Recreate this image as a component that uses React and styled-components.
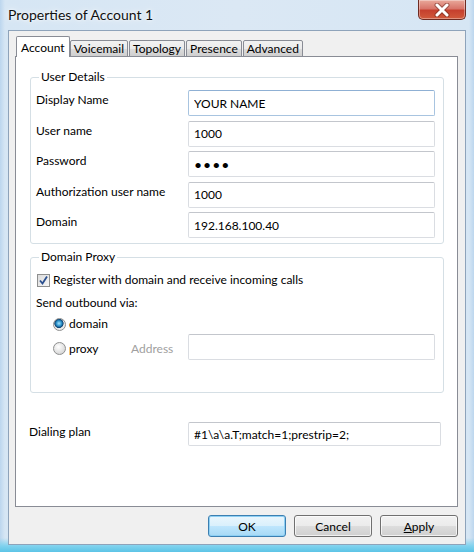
import styled, { createGlobalStyle } from "styled-components";

const GlobalStyle = createGlobalStyle`
  html, body {
    margin: 0;
    padding: 0;
  }
  body {
    width: 474px;
    height: 552px;
    overflow: hidden;
    font-family: Lato, "Noto Sans", sans-serif;
    font-size: 12px;
    color: #000;
  }
  * { box-sizing: border-box; }
`;

const tabs = ["Account", "Voicemail", "Topology", "Presence", "Advanced"];

const userFields = [
  { label: "Display Name", value: "YOUR NAME", focused: true },
  { label: "User name", value: "1000" },
  { label: "Password", value: "1234", type: "password" },
  { label: "Authorization user name", value: "1000" },
  { label: "Domain", value: "192.168.100.40" },
];

const App = () => {
  return (
    <Window>
      <GlobalStyle />
      <TitleBar>
        <Title>Properties of Account 1</Title>
        <CloseButton>
          <svg width="20" height="14" viewBox="0 0 20 14">
            <path d="M5 2 L15 12 M15 2 L5 12" stroke="#6b2a20" strokeWidth="5" strokeLinecap="round" opacity="0.55" />
            <path d="M5 2 L15 12 M15 2 L5 12" stroke="#fff" strokeWidth="3" strokeLinecap="round" />
          </svg>
        </CloseButton>
      </TitleBar>

      <Client>
        <TabStrip>
          {tabs.map((t, i) => (
            <Tab key={t} $active={i === 0}>{t}</Tab>
          ))}
        </TabStrip>

        <Panel>
          <Group>
            <Legend>User Details</Legend>
            <FieldGrid>
              {userFields.map((f) => (
                <Row key={f.label}>
                  <Label>{f.label}</Label>
                  <TextBox
                    readOnly
                    type={f.type || "text"}
                    value={f.value}
                    $focused={f.focused}
                    $secret={f.type === "password"}
                  />
                </Row>
              ))}
            </FieldGrid>
          </Group>

          <ProxyGroup>
            <Legend>Domain Proxy</Legend>
            <CheckRow>
              <CheckBox>
                <svg width="11" height="11" viewBox="0 0 11 11">
                  <path d="M2 5.5 L4.5 8.5 L9 1.5" stroke="#2a4f8f" strokeWidth="1.8" fill="none" />
                </svg>
              </CheckBox>
              Register with domain and receive incoming calls
            </CheckRow>
            <Caption>Send outbound via:</Caption>
            <RadioRow>
              <Radio $checked />
              domain
            </RadioRow>
            <ProxyRow>
              <RadioLabel>
                <Radio />
                proxy
              </RadioLabel>
              <Dimmed>Address</Dimmed>
              <TextBox readOnly value="" />
            </ProxyRow>
          </ProxyGroup>

          <DialRow>
            <Label>Dialing plan</Label>
            <DialBox readOnly value="#1\a\a.T;match=1;prestrip=2;" />
          </DialRow>
        </Panel>

        <ButtonBar>
          <Button $default>OK</Button>
          <Button>Cancel</Button>
          <Button>
            <u>A</u>pply
          </Button>
        </ButtonBar>
      </Client>
    </Window>
  );
};

const Window = styled.div`
  width: 474px;
  height: 552px;
  display: flex;
  flex-direction: column;
  background:
    linear-gradient(to bottom, rgba(255,255,255,0) 538px, #7fd2ee 546px, #5cc4e6 552px),
    linear-gradient(to right, #bcd6ee 0px, #d6e6f4 5px, #dbe8f4 50%, #d6e6f4 469px, #bcd6ee 474px),
    linear-gradient(to bottom, #eef4fa 0%, #d2e3f3 12%, #c7dcf0 100%);
`;

const TitleBar = styled.div`
  height: 30px;
  flex-shrink: 0;
  display: flex;
  justify-content: space-between;
  align-items: flex-start;
  padding: 0 8px 0 8px;
`;

const Title = styled.div`
  margin-top: 6px;
  font-size: 14px;
  color: #111;
  text-shadow: 0 0 8px rgba(255,255,255,0.95), 0 0 3px #fff;
`;

const CloseButton = styled.div`
  width: 48px;
  height: 20px;
  border: 1px solid #6e2b22;
  border-top: none;
  border-radius: 0 0 5px 5px;
  background: linear-gradient(to bottom, #e9a99b 0%, #d8756a 45%, #c6402e 55%, #d15a3c 100%);
  box-shadow: inset 0 0 0 1px rgba(255,255,255,0.35);
  display: flex;
  align-items: center;
  justify-content: center;
`;

const Client = styled.div`
  flex: 1;
  margin: 0 8px 7px 8px;
  border: 1px solid #8ea3ba;
  background: #f0f0f0;
  display: flex;
  flex-direction: column;
  padding: 6px 7px 7px 6px;
`;

const TabStrip = styled.div`
  display: flex;
  align-items: flex-end;
  height: 20px;
  padding-left: 1px;
  margin-bottom: -1px;
  position: relative;
  z-index: 1;
`;

const Tab = styled.div`
  height: ${(p) => (p.$active ? "21px" : "17px")};
  padding: ${(p) => (p.$active ? "1px 4px 0 4px" : "0 3px")};
  margin-right: ${(p) => (p.$active ? "0" : "1px")};
  border: 1px solid #898c95;
  border-bottom: ${(p) => (p.$active ? "none" : "1px solid #898c95")};
  border-radius: 2px 2px 0 0;
  background: ${(p) =>
    p.$active ? "#fff" : "linear-gradient(to bottom, #f2f2f2 0%, #ebebeb 50%, #dddddd 51%, #cfcfcf 100%)"};
  display: flex;
  align-items: center;
  font-size: 12px;
  line-height: 14px;
  white-space: nowrap;
`;

const Panel = styled.div`
  flex: 1;
  background: #fff;
  border: 1px solid #898c95;
  padding: 12px 13px 0 14px;
  display: flex;
  flex-direction: column;
`;

const Group = styled.fieldset`
  margin: 0;
  border: 1px solid #d5dfe5;
  border-radius: 3px;
  padding: 5px 8px 5px 5px;
  min-width: 0;
`;

const ProxyGroup = styled(Group)`
  margin-top: 5px;
  padding: 7px 8px 32px 5px;
  display: flex;
  flex-direction: column;
`;

const Legend = styled.legend`
  padding: 0 2px;
  margin-left: 3px;
  font-size: 12px;
  line-height: 16px;
`;

const FieldGrid = styled.div`
  display: flex;
  flex-direction: column;
  gap: 4.5px;
`;

const Row = styled.div`
  display: grid;
  grid-template-columns: 152px 1fr;
  align-items: start;
`;

const Label = styled.div`
  padding-top: 2px;
  line-height: 16px;
  white-space: nowrap;
`;

const TextBox = styled.input`
  height: 26px;
  width: 100%;
  margin: 0;
  padding: 0 5px;
  font-family: inherit;
  font-size: ${(p) => (p.$secret ? "14px" : "12px")};
  letter-spacing: ${(p) => (p.$secret ? "1px" : "normal")};
  color: #000;
  background: #fff;
  border: 1px solid ${(p) => (p.$focused ? "#a8c4e0" : "#dadde2")};
  border-top-color: ${(p) => (p.$focused ? "#8fb0d4" : "#c3c6cc")};
  border-radius: 2px;
  outline: none;
`;

const DialBox = styled(TextBox)`
  height: 24px;
`;

const CheckRow = styled.div`
  display: flex;
  align-items: center;
  gap: 3px;
  margin-left: 1px;
  line-height: 16px;
`;

const CheckBox = styled.span`
  width: 13px;
  height: 13px;
  border: 1px solid #8e8f8f;
  background: linear-gradient(135deg, #dcdcdc 0%, #f6f6f6 100%);
  display: flex;
  align-items: center;
  justify-content: center;
  flex-shrink: 0;
`;

const Caption = styled.div`
  margin-top: 7px;
  line-height: 16px;
`;

const RadioRow = styled.div`
  display: flex;
  align-items: center;
  gap: 3px;
  margin-top: 5px;
  padding-left: 17px;
  line-height: 16px;
`;

const Radio = styled.span`
  width: 13px;
  height: 13px;
  border-radius: 50%;
  border: 1px solid #8e8f8f;
  flex-shrink: 0;
  background: ${(p) =>
    p.$checked
      ? "radial-gradient(circle at 45% 40%, #a6e4ff 0%, #2b91c9 30%, #0d3f6e 48%, #e8e8e8 55%, #f4f4f4 100%)"
      : "radial-gradient(circle at 40% 35%, #ffffff 0%, #e2e2e2 55%, #c9c9c9 100%)"};
`;

const ProxyRow = styled.div`
  display: grid;
  grid-template-columns: 78px 57px 1fr;
  align-items: center;
  margin-top: 2px;
  padding-left: 17px;
`;

const RadioLabel = styled.div`
  display: flex;
  align-items: center;
  gap: 3px;
  margin-top: 2px;
`;

const Dimmed = styled.span`
  color: #a0a0a0;
  margin-top: 2px;
`;

const DialRow = styled.div`
  display: grid;
  grid-template-columns: 159px 1fr;
  align-items: start;
  margin-top: 29px;
  margin-left: -1px;
  margin-right: 3px;
`;

const ButtonBar = styled.div`
  display: flex;
  justify-content: flex-end;
  gap: 8px;
  margin-top: 8px;
`;

const Button = styled.button`
  width: 78px;
  height: 22px;
  margin: 0;
  padding: 0;
  font-family: inherit;
  font-size: 12px;
  color: #000;
  border-radius: 3px;
  border: 1px solid ${(p) => (p.$default ? "#3c7fb1" : "#707070")};
  background: ${(p) =>
    p.$default
      ? "linear-gradient(to bottom, #eaf6fd 0%, #d9f0fc 50%, #bee6fd 51%, #a7d9f5 100%)"
      : "linear-gradient(to bottom, #f2f2f2 0%, #ebebeb 50%, #dddddd 51%, #cfcfcf 100%)"};
  box-shadow: inset 0 0 0 1px ${(p) => (p.$default ? "#8ed0f4" : "rgba(255,255,255,0.7)")};

  u {
    text-decoration: underline;
  }
`;

export default App;
